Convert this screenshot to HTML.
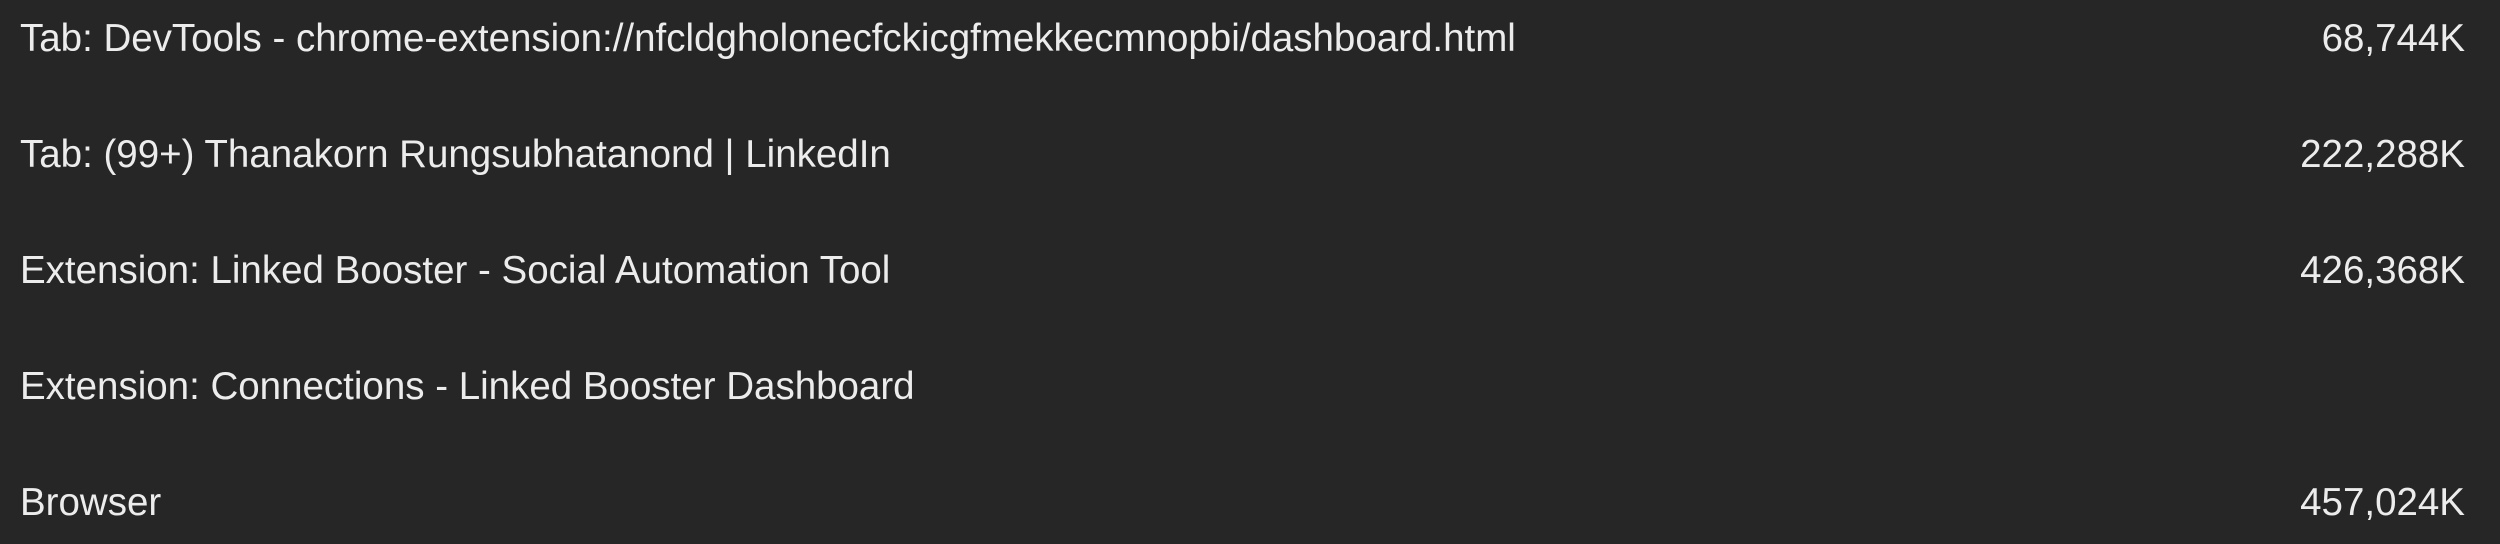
<!DOCTYPE html>
<html><head><meta charset="utf-8"><style>
html,body{margin:0;padding:0;background:#262626;width:2500px;height:544px;overflow:hidden}
.r{position:absolute;left:20px;right:35px;height:50px;font-family:"Liberation Sans",sans-serif;font-size:38.5px;color:#ececec;line-height:50px}
.r .n{position:absolute;right:0;top:0}
</style></head><body>
<div class="r" style="top:14px">Tab: DevTools - chrome-extension://nfcldgholonecfckicgfmekkecmnopbi/dashboard.html<span class="n">68,744K</span></div>
<div class="r" style="top:130px">Tab: (99+) Thanakorn Rungsubhatanond | LinkedIn<span class="n">222,288K</span></div>
<div class="r" style="top:246px">Extension: Linked Booster - Social Automation Tool<span class="n">426,368K</span></div>
<div class="r" style="top:362px">Extension: Connections - Linked Booster Dashboard</div>
<div class="r" style="top:478px">Browser<span class="n">457,024K</span></div>
</body></html>
